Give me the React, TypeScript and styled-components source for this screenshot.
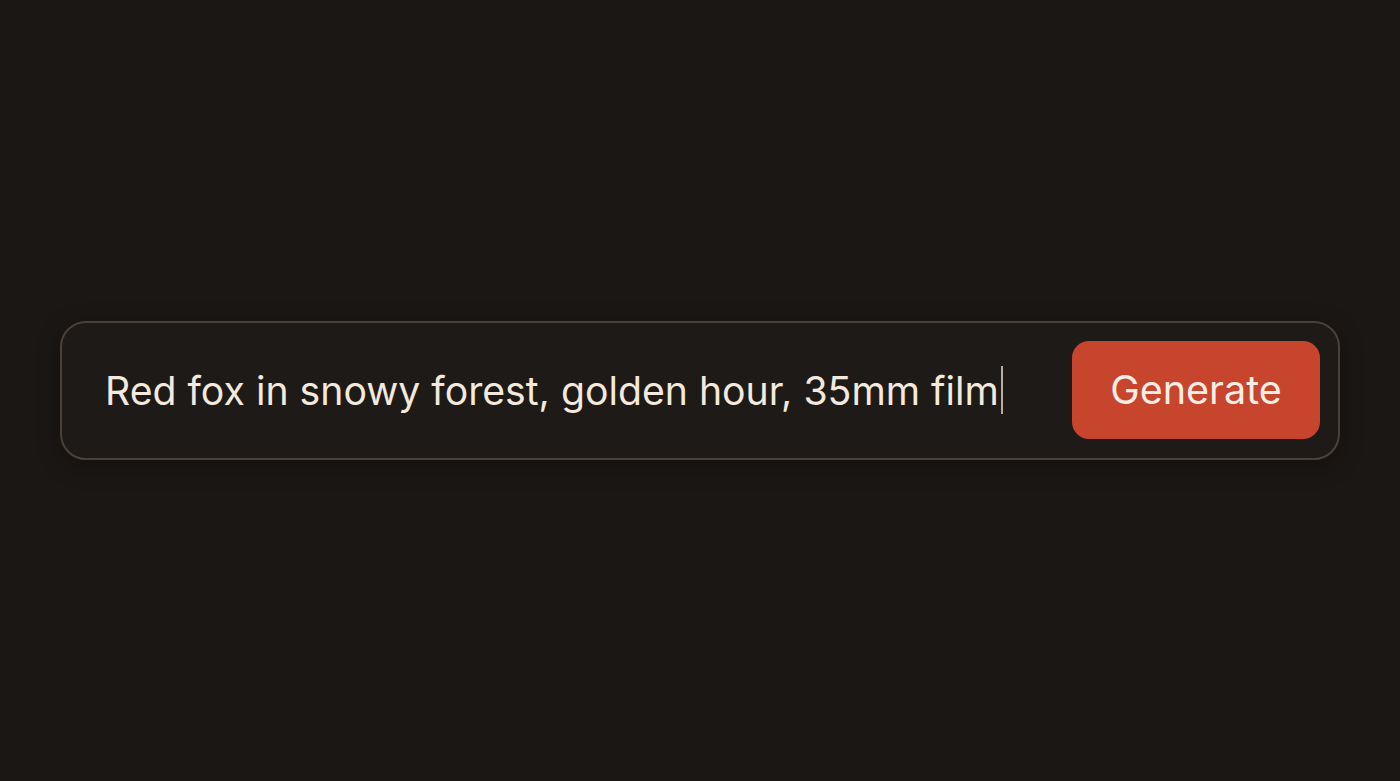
import React from "react";
import styled, { createGlobalStyle } from "styled-components";

const Global = createGlobalStyle`
  html, body { margin: 0; padding: 0; background: #1b1714; }
  body { font-family: Inter, "Noto Sans", sans-serif; }
`;

const Page = styled.div`
  width: 100vw;
  height: 100vh;
  box-sizing: border-box;
  display: flex;
  align-items: center;
  padding: 0 60px 1px 60px;
`;

const Bar = styled.div`
  flex: 1;
  height: 139px;
  box-sizing: border-box;
  display: flex;
  align-items: center;
  justify-content: space-between;
  padding: 0 18px 0 43px;
  border: 2px solid #4a423a;
  border-radius: 26px;
  background: #1e1a17;
  box-shadow: 0 6px 24px rgba(0, 0, 0, 0.3);
`;

const Prompt = styled.div`
  display: flex;
  align-items: center;
  color: #f3e9dc;
  font-size: 39.2px;
  white-space: nowrap;
`;

const Caret = styled.span`
  display: inline-block;
  width: 2px;
  height: 48px;
  margin-left: 2px;
  background: #b8ada0;
`;

const GenerateButton = styled.button`
  width: 248px;
  height: 98px;
  border: none;
  border-radius: 17px;
  background: #c8452d;
  color: #fbeee6;
  font-family: Inter, "Noto Sans", sans-serif;
  font-size: 39.5px;
  padding: 0;
  cursor: pointer;
`;

export default function App() {
  return (
    <>
      <Global />
      <Page>
        <Bar>
          <Prompt>
            Red fox in snowy forest, golden hour, 35mm film
            <Caret />
          </Prompt>
          <GenerateButton>Generate</GenerateButton>
        </Bar>
      </Page>
    </>
  );
}
